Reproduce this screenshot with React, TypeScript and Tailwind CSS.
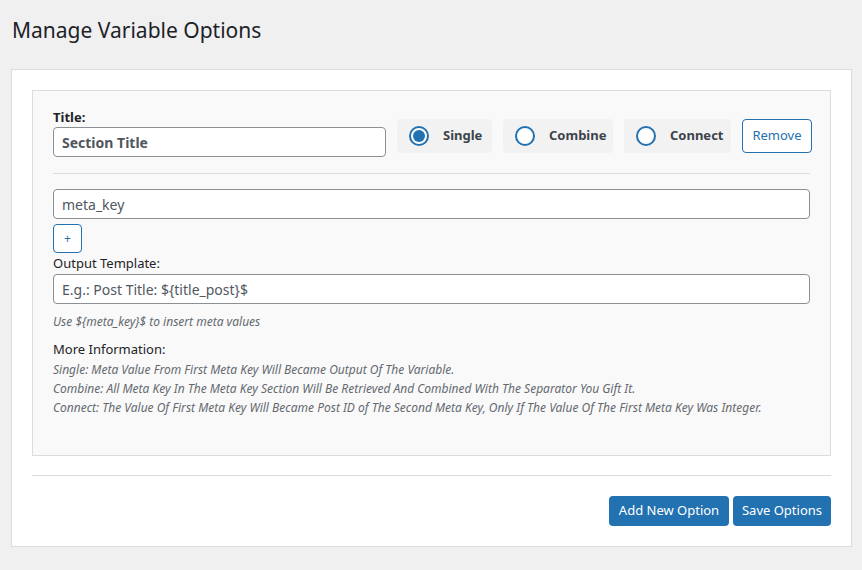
export default function App() {
  const font = { fontFamily: '"Noto Sans", "Open Sans", sans-serif' };
  const Radio = ({ label, on, w }: { label: string; on?: boolean; w: string }) => (
    <div className={`h-[34px] ${w} bg-[#f2f2f2] rounded flex items-center pl-3 gap-[14px]`}>
      <span className="w-[20px] h-[20px] rounded-full border-2 border-[#2271b1] bg-white flex items-center justify-center">
        {on && <span className="w-[12px] h-[12px] rounded-full bg-[#2271b1]" />}
      </span>
      <span className="text-[13px] font-bold text-[#3c434a]">{label}</span>
    </div>
  );
  return (
    <div style={font} className="w-[862px] h-[570px] bg-[#f0f0f1] text-[#3c434a] overflow-hidden">
      <h1 className="pl-[12px] pt-[15px] h-[69px] text-[21px] text-[#1d2327]">Manage Variable Options</h1>
      <div className="mx-[11px] w-[841px] h-[478px] bg-white border border-[#dcdcde] pt-[20px] px-[20px]">
        <div className="h-[366px] bg-[#f9f9f9] border border-[#dcdcde] px-[20px] pt-[18px]">
          <div className="flex items-end gap-[11px]">
            <div className="flex flex-col">
              <span className="text-[13px] font-bold text-[#1d2327] leading-[17px]">Title:</span>
              <div className="mt-[1px] w-[333px] h-[30px] border border-[#8c8f94] rounded bg-white flex items-center px-2 text-[14px] font-bold text-[#50575e]">Section Title</div>
            </div>
            <div className="flex gap-[11px] mb-[4px]">
              <Radio label="Single" on w="w-[95px]" />
              <Radio label="Combine" w="w-[110px]" />
              <Radio label="Connect" w="w-[107px]" />
              <button className="h-[34px] w-[70px] border border-[#2271b1] rounded text-[13px] text-[#2271b1] bg-white">Remove</button>
            </div>
          </div>
          <div className="border-t border-[#dcdcde] mt-[16px]" />
          <div className="mt-[15px] h-[30px] border border-[#8c8f94] rounded bg-white flex items-center px-2 text-[14px] text-[#50575e]">meta_key</div>
          <button className="mt-[5px] w-[29px] h-[29px] border border-[#2271b1] rounded text-[12px] text-[#2271b1] bg-white">+</button>
          <div className="text-[13px] leading-[17px] mt-[2px] text-[#1d2327]">Output Template:</div>
          <div className="mt-[2px] h-[30px] border border-[#8c8f94] rounded bg-white flex items-center px-2 text-[14px] text-[#50575e]">E.g.: Post Title: ${"{title_post}"}$</div>
          <div className="mt-[9px] text-[12px] italic text-[#646970]">Use ${"{meta_key}"}$ to insert meta values</div>
          <div className="mt-[9px] text-[13px] text-[#1d2327]">More Information:</div>
          <div className="text-[12px] italic text-[#646970] leading-[19px] pr-[20px]">
            <div>Single: Meta Value From First Meta Key Will Became Output Of The Variable.</div>
            <div>Combine: All Meta Key In The Meta Key Section Will Be Retrieved And Combined With The Separator You Gift It.</div>
            <div>Connect: The Value Of First Meta Key Will Became Post ID of The Second Meta Key, Only If The Value Of The First Meta Key Was Integer.</div>
          </div>
        </div>
        <div className="border-t border-[#dcdcde] mt-[19px]" />
        <div className="flex justify-end gap-[4px] mt-[20px]">
          <button className="h-[30px] w-[120px] bg-[#2271b1] rounded-sm text-white text-[13px]">Add New Option</button>
          <button className="h-[30px] w-[98px] bg-[#2271b1] rounded-sm text-white text-[13px]">Save Options</button>
        </div>
      </div>
    </div>
  );
}
